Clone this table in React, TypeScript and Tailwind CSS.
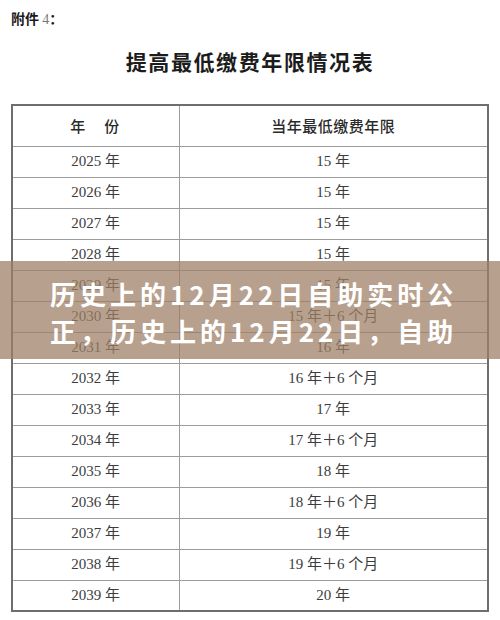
import React from 'react';

type Row = { year: string; limit: string };

const rows: Row[] = [
  { year: '2025', limit: '15 年' },
  { year: '2026', limit: '15 年' },
  { year: '2027', limit: '15 年' },
  { year: '2028', limit: '15 年' },
  { year: '2029', limit: '15 年' },
  { year: '2030', limit: '15 年＋6 个月' },
  { year: '2031', limit: '16 年' },
  { year: '2032', limit: '16 年＋6 个月' },
  { year: '2033', limit: '17 年' },
  { year: '2034', limit: '17 年＋6 个月' },
  { year: '2035', limit: '18 年' },
  { year: '2036', limit: '18 年＋6 个月' },
  { year: '2037', limit: '19 年' },
  { year: '2038', limit: '19 年＋6 个月' },
  { year: '2039', limit: '20 年' },
];

const serif = "font-['Liberation_Serif','Noto_Sans_CJK_SC',serif]";
const sans = "font-['Noto_Sans_CJK_SC','Noto_Sans',sans-serif]";

export default function App() {
  return (
    <div className="relative w-[500px] h-[620px] overflow-hidden bg-white">
      {/* Document */}
      <div className="pt-[8px]">
        <p className={`pl-[11px] text-[14px] leading-[20px] text-[#1a1a1a] font-semibold ${sans}`}>
          附件 <span className={`font-normal text-[#777] ${serif}`}>4</span>：
        </p>
        <h1 className={`mt-[19px] text-center text-[21px] leading-[24px] font-bold tracking-[1.6px] text-[#1c1c1c] ${sans}`}>
          提高最低缴费年限情况表
        </h1>

        <table className="mt-[31px] ml-[11px] w-[478px] border-collapse border-2 border-[#6e6e6e]">
          <thead>
            <tr className="h-[41px]">
              <th className={`w-[167px] border border-[#9c9c9c] text-[15px] font-medium tracking-[2px] text-[#2a2a2a] ${sans}`}>
                年　份
              </th>
              <th className={`border border-[#9c9c9c] text-[15px] font-medium tracking-[0.5px] text-[#2a2a2a] ${sans}`}>
                当年最低缴费年限
              </th>
            </tr>
          </thead>
          <tbody>
            {rows.map((r) => (
              <tr key={r.year} className="h-[31px]">
                <td className={`border border-[#9c9c9c] text-center text-[15px] text-[#3c3c3c] ${serif}`}>
                  {r.year} 年
                </td>
                <td className={`border border-[#9c9c9c] text-center text-[15px] text-[#3c3c3c] ${serif}`}>
                  {r.limit}
                </td>
              </tr>
            ))}
          </tbody>
        </table>
      </div>

      {/* Title overlay */}
      <div className="absolute left-0 right-0 top-[261px] h-[98px] bg-[rgba(158,128,102,0.74)] pt-[14px]">
        <p className={`ml-[50px] w-[414px] text-[26px] leading-[37px] font-bold tracking-[4px] text-white ${sans}`}>
          历史上的12月22日自助实时公正，历史上的12月22日，自助
        </p>
      </div>
    </div>
  );
}
